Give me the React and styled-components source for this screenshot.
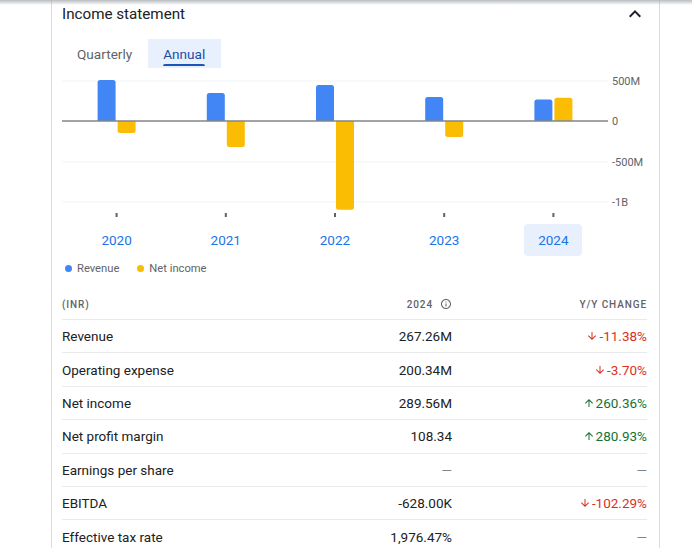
import React from 'react';
import styled, { createGlobalStyle } from 'styled-components';

const GlobalStyle = createGlobalStyle`
  body {
    margin: 0;
    background: #fff;
    font-family: Roboto, "Noto Sans", Arial, sans-serif;
    color: #202124;
  }
`;

const TopShadow = styled.div`
  height: 5px;
  background: linear-gradient(#9aa0a6, rgba(255, 255, 255, 0));
  opacity: 0.7;
`;

const Card = styled.section`
  margin-left: 51px;
  width: 585px;
  padding: 0 12px 0 10px;
  border-left: 1px solid #dadce0;
  border-right: 1px solid #dadce0;
  margin-top: -5px;
`;

const Header = styled.div`
  display: flex;
  align-items: center;
  justify-content: space-between;
  height: 27px;
`;

const Title = styled.h2`
  margin: 0;
  font-size: 15.2px;
  font-weight: 400;
  color: #202124;
`;

const Tabs = styled.div`
  display: flex;
  margin-top: 12px;
  height: 29px;
`;

const Tab = styled.button`
  position: relative;
  border: none;
  margin: 0;
  padding: 0 16px 0 15px;
  font: 400 13.6px Roboto, Arial, sans-serif;
  color: ${(p) => (p.$active ? '#174ea6' : '#5f6368')};
  background: ${(p) => (p.$active ? '#e8f0fe' : 'transparent')};
  cursor: pointer;

  &::after {
    content: '';
    display: ${(p) => (p.$active ? 'block' : 'none')};
    position: absolute;
    left: 15px;
    right: 16px;
    bottom: 2px;
    height: 2px;
    background: #1a56b8;
    border-radius: 2px 2px 0 0;
  }
`;

const ChartSvg = styled.svg`
  display: block;
  margin-top: 7px;
  overflow: visible;
`;

const AxisLabel = styled.text`
  font: 400 11px Roboto, Arial, sans-serif;
  fill: #5f6368;
`;

const Years = styled.div`
  display: grid;
  grid-template-columns: repeat(5, 109.2px);
  margin-top: 6px;
`;

const Year = styled.button`
  justify-self: center;
  width: 58px;
  height: 32px;
  border: none;
  border-radius: 4px;
  font: 400 13.5px Roboto, Arial, sans-serif;
  color: #1a73e8;
  background: ${(p) => (p.$active ? '#e8f0fe' : 'transparent')};
`;

const Legend = styled.div`
  display: flex;
  gap: 18px;
  margin-top: 6px;
  padding-left: 3px;
  font-size: 11.2px;
  color: #5f6368;
`;

const LegendItem = styled.span`
  display: flex;
  align-items: center;
  gap: 5px;

  &::before {
    content: '';
    width: 7px;
    height: 7px;
    border-radius: 50%;
    background: ${(p) => p.$color};
  }
`;

const Table = styled.div`
  margin-top: 14px;
`;

const Row = styled.div`
  display: grid;
  grid-template-columns: 1fr 160px 195px;
  align-items: center;
  height: ${(p) => (p.$head ? '30px' : '33.4px')};
  border-top: ${(p) => (p.$head ? 'none' : '1px solid #e8eaed')};
  box-sizing: border-box;
  font-size: 13.5px;
  color: #202124;
`;

const HeadCell = styled.div`
  font-size: 10px;
  font-weight: 500;
  letter-spacing: 0.9px;
  color: #5f6368;
  display: flex;
  align-items: center;
  justify-content: ${(p) => (p.$align === 'right' ? 'flex-end' : 'flex-start')};
  gap: 7px;
`;

const Value = styled.div`
  text-align: right;
  color: ${(p) => (p.$empty ? '#80868b' : '#202124')};
`;

const Change = styled.div`
  display: flex;
  align-items: center;
  justify-content: flex-end;
  gap: 1px;
  color: ${(p) => (p.$dir === 'up' ? '#137333' : p.$dir === 'down' ? '#d93025' : '#80868b')};
`;

const years = ['2020', '2021', '2022', '2023', '2024'];
const revenue = [512, 350, 450, 301, 267.26];
const netIncome = [-150, -325, -1110, -200, 289.56];

const rows = [
  ['Revenue', '267.26M', '-11.38%', 'down'],
  ['Operating expense', '200.34M', '-3.70%', 'down'],
  ['Net income', '289.56M', '260.36%', 'up'],
  ['Net profit margin', '108.34', '280.93%', 'up'],
  ['Earnings per share', '—', '—', null],
  ['EBITDA', '-628.00K', '-102.29%', 'down'],
  ['Effective tax rate', '1,976.47%', '—', null],
];

const ZERO = 46;
const SCALE = 0.08;

function Bar({ x, value, color }) {
  const h = Math.abs(value) * SCALE;
  const r = 2.5;
  const w = 18;
  let d;
  if (value >= 0) {
    const top = ZERO - h;
    d = `M${x} ${ZERO} V${top + r} Q${x} ${top} ${x + r} ${top} H${x + w - r} Q${x + w} ${top} ${x + w} ${top + r} V${ZERO} Z`;
  } else {
    const bot = ZERO + h;
    d = `M${x} ${ZERO} V${bot - r} Q${x} ${bot} ${x + r} ${bot} H${x + w - r} Q${x + w} ${bot} ${x + w} ${bot - r} V${ZERO} Z`;
  }
  return <path d={d} fill={color} />;
}

function Chart() {
  const grid = [
    { y: 6, label: '500M' },
    { y: 87, label: '-500M' },
    { y: 127, label: '-1B' },
  ];
  return (
    <ChartSvg width="585" height="143">
      {grid.map((g) => (
        <g key={g.label}>
          <line x1="0" x2="546" y1={g.y} y2={g.y} stroke="#f1f3f4" strokeWidth="1" />
          <AxisLabel x="550" y={g.y + 4}>{g.label}</AxisLabel>
        </g>
      ))}
      {years.map((y, i) => {
        const c = 54.6 + i * 109.2;
        return (
          <g key={y}>
            <Bar x={c - 19} value={revenue[i]} color="#4285f4" />
            <Bar x={c + 1} value={netIncome[i]} color="#fbbc04" />
            <rect x={c - 1} y="138" width="2" height="4" fill="#5f6368" />
          </g>
        );
      })}
      <line x1="0" x2="546" y1={ZERO} y2={ZERO} stroke="#80868b" strokeWidth="1.5" />
      <AxisLabel x="550" y={ZERO + 4}>0</AxisLabel>
    </ChartSvg>
  );
}

const Arrow = ({ dir }) => (
  <svg width="12" height="12" viewBox="0 0 24 24" fill="currentColor">
    {dir === 'up' ? (
      <path d="M4 12l1.41 1.41L11 7.83V20h2V7.83l5.58 5.59L20 12l-8-8-8 8z" />
    ) : (
      <path d="M20 12l-1.41-1.41L13 16.17V4h-2v12.17l-5.58-5.59L4 12l8 8 8-8z" />
    )}
  </svg>
);

const InfoIcon = () => (
  <svg width="12" height="12" viewBox="0 0 24 24" fill="#5f6368">
    <path d="M11 7h2v2h-2zm0 4h2v6h-2zm1-9C6.48 2 2 6.48 2 12s4.48 10 10 10 10-4.48 10-10S17.52 2 12 2zm0 18c-4.41 0-8-3.59-8-8s3.59-8 8-8 8 3.59 8 8-3.59 8-8 8z" />
  </svg>
);

const Chevron = () => (
  <svg width="24" height="24" viewBox="0 0 24 24" fill="#202124">
    <path d="M7.41 15.41L12 10.83l4.59 4.58L18 14l-6-6-6 6z" />
  </svg>
);

export default function App() {
  return (
    <>
      <GlobalStyle />
      <TopShadow />
      <Card>
        <Header>
          <Title>Income statement</Title>
          <Chevron />
        </Header>
        <Tabs>
          <Tab>Quarterly</Tab>
          <Tab $active>Annual</Tab>
        </Tabs>
        <Chart />
        <Years>
          {years.map((y) => (
            <Year key={y} $active={y === '2024'}>{y}</Year>
          ))}
        </Years>
        <Legend>
          <LegendItem $color="#4285f4">Revenue</LegendItem>
          <LegendItem $color="#fbbc04">Net income</LegendItem>
        </Legend>
        <Table>
          <Row $head>
            <HeadCell>(INR)</HeadCell>
            <HeadCell $align="right">2024 <InfoIcon /></HeadCell>
            <HeadCell $align="right">Y/Y CHANGE</HeadCell>
          </Row>
          {rows.map(([label, value, change, dir]) => (
            <Row key={label}>
              <div>{label}</div>
              <Value $empty={value === '—'}>{value}</Value>
              <Change $dir={dir}>
                {dir && <Arrow dir={dir} />}
                {change}
              </Change>
            </Row>
          ))}
        </Table>
      </Card>
    </>
  );
}
